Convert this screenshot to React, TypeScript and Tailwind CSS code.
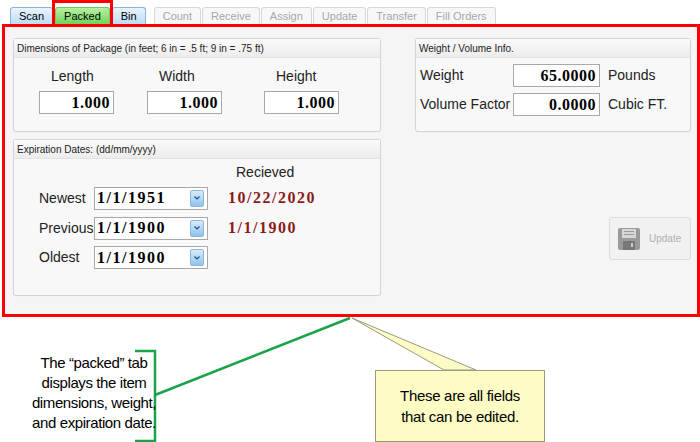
const font = { fontFamily: '"Liberation Sans", Arial, sans-serif' }
const serif = { fontFamily: '"Liberation Serif", "DejaVu Serif", serif' }

function Tab({ label, active, green }: { label: string; active?: boolean; green?: boolean }) {
  const cls = green
    ? 'bg-gradient-to-b from-[#b6f0a0] to-[#6fd35a] text-black border-[#7cbf6c]'
    : active
      ? 'bg-gradient-to-b from-[#eaf4fd] to-[#bcdcf7] text-black border-[#8db2d6]'
      : 'bg-[#f7f7f7] text-[#a8a8a8] border-[#d8d8d8]'
  return (
    <div className={`h-[17px] px-[8px] flex items-center text-[11px] border border-b-0 rounded-t-[3px] ${cls}`}>{label}</div>
  )
}

function Group({ title, className = '', children }: { title: string; className?: string; children: React.ReactNode }) {
  return (
    <div className={`border border-[#d4d4d4] rounded-[3px] bg-[#f8f8f8] shadow-[0_0_1px_rgba(0,0,0,0.1)] ${className}`}>
      <div className="h-[19px] px-[3px] flex items-center text-[10px] text-[#222] bg-gradient-to-b from-[#fbfbfb] to-[#ececec] border-b border-[#e2e2e2]">{title}</div>
      {children}
    </div>
  )
}

function Num({ v, w }: { v: string; w: string }) {
  return (
    <div className={`h-[23px] ${w} border border-[#a8a8a8] bg-white flex items-center justify-end pr-[3px] text-[16px] font-bold text-black tracking-[0.5px]`} style={serif}>{v}</div>
  )
}

function DateBox({ v }: { v: string }) {
  return (
    <div className="h-[23px] w-[114px] border border-[#a8a8a8] bg-white flex items-center justify-between pl-[2px] pr-[3px]">
      <span className="text-[16px] font-bold text-black tracking-[1.5px]" style={serif}>{v}</span>
      <span className="w-[14px] h-[17px] rounded-[2px] bg-gradient-to-b from-[#d8ecfb] to-[#8ec3ee] border border-[#8fb7dc] flex items-center justify-center">
        <svg width="6" height="4" viewBox="0 0 6 4"><path d="M0.5 0.5 L3 3 L5.5 0.5" stroke="#1d4f8a" strokeWidth="1.2" fill="none" /></svg>
      </span>
    </div>
  )
}

export default function App() {
  return (
    <div className="relative w-[700px] h-[442px] bg-white overflow-hidden" style={font}>
      <div className="flex items-end h-[24px] pl-[10px] gap-[1px]">
        <Tab label="Scan" active />
        <div className="border-[3px] border-b-0 border-[#ff0000] -mx-[2px] h-[24px] flex items-end relative z-10"><Tab label="Packed" green /></div>
        <Tab label="Bin" active />
        <div className="w-[6px]" />
        <Tab label="Count" />
        <Tab label="Receive" />
        <Tab label="Assign" />
        <Tab label="Update" />
        <Tab label="Transfer" />
        <Tab label="Fill Orders" />
      </div>
      <div className="ml-[2px] w-[698px] h-[293px] border-[3px] border-[#ff0000] bg-[#f5f5f5] flex pl-[8px] pt-[11px] pr-[6px] gap-[34px]">
        <div className="w-[370px] flex flex-col gap-[7px]">
          <Group title="Dimensions of Package (in feet; 6 in = .5 ft; 9 in = .75 ft)" className="h-[94px]">
            <div className="flex pl-[25px] pt-[8px] gap-[33px] text-[14px] text-[#222]">
              {['Length', 'Width', 'Height'].map((l, i) => (
                <div key={l} className={i === 2 ? 'ml-[9px]' : ''}>
                  <div className="pl-[12px] mb-[4px]">{l}</div>
                  <Num v="1.000" w="w-[75px]" />
                </div>
              ))}
            </div>
          </Group>
          <Group title="Expiration Dates: (dd/mm/yyyy)" className="h-[157px]">
            <div className="pl-[222px] pt-[3px] text-[14px] text-[#222]">Recieved</div>
            <div className="flex flex-col gap-[6px] mt-[3px] text-[14px] text-[#222]">
              {[['Newest', '1/1/1951', '10/22/2020'], ['Previous', '1/1/1900', '1/1/1900'], ['Oldest', '1/1/1900', '']].map(([l, d, r]) => (
                <div key={l} className="flex items-center">
                  <span className="w-[80px] pl-[25px]">{l}</span>
                  <DateBox v={d} />
                  <span className="ml-[20px] text-[16px] font-bold text-[#8b1a1a] tracking-[1.5px]" style={serif}>{r}</span>
                </div>
              ))}
            </div>
          </Group>
        </div>
        <div className="flex-1 flex flex-col items-end">
          <Group title="Weight / Volume Info." className="w-[276px] h-[94px]">
            <div className="flex flex-col gap-[6px] pt-[6px] pl-[4px] text-[14px] text-[#222]">
              <div className="flex items-center"><span className="w-[93px]">Weight</span><Num v="65.0000" w="w-[87px]" /><span className="ml-[8px]">Pounds</span></div>
              <div className="flex items-center"><span className="w-[93px]">Volume Factor</span><Num v="0.0000" w="w-[87px]" /><span className="ml-[8px]">Cubic FT.</span></div>
            </div>
          </Group>
          <div className="mt-[85px] w-[82px] h-[43px] border border-[#dcdcdc] rounded-[3px] bg-[#f1f1f1] flex items-center gap-[8px] pl-[7px] text-[10px] text-[#b0b0b0]">
            <svg width="24" height="24" viewBox="0 0 24 24">
              <rect x="1" y="1" width="22" height="22" rx="2" fill="#9a9a9a" />
              <rect x="5" y="2" width="14" height="9" fill="#d6d6d6" />
              <rect x="7" y="4" width="10" height="1" fill="#999" />
              <rect x="7" y="7" width="10" height="1" fill="#999" />
              <rect x="6" y="14" width="12" height="9" fill="#777" />
              <rect x="14" y="16" width="2" height="4" fill="#ccc" />
            </svg>
            Update
          </div>
        </div>
      </div>
      <svg className="absolute left-0 top-0 pointer-events-none" width="700" height="442">
        <path d="M135 351 H155 V441 H135 M155 395 L350 318" stroke="#1aa34a" strokeWidth="2.5" fill="none" />
        <path d="M352 318 L444 370 L476 370 Z" fill="#fdfcc4" stroke="#9a9a80" strokeWidth="1" />
      </svg>
      <div className="absolute left-[375px] top-[370px] w-[170px] h-[72px] bg-[#fdfcc4] border border-[#9a9a80] flex items-center justify-center text-center text-[15px] leading-[21px] text-black tracking-[-0.3px]">
        These are all fields<br />that can be edited.
      </div>
      <div className="absolute left-[30px] top-[353px] w-[128px] text-center text-[15px] leading-[20px] text-black tracking-[-0.4px]">
        The “packed” tab<br />displays the item<br />dimensions, weight,<br />and expiration date.
      </div>
    </div>
  )
}
